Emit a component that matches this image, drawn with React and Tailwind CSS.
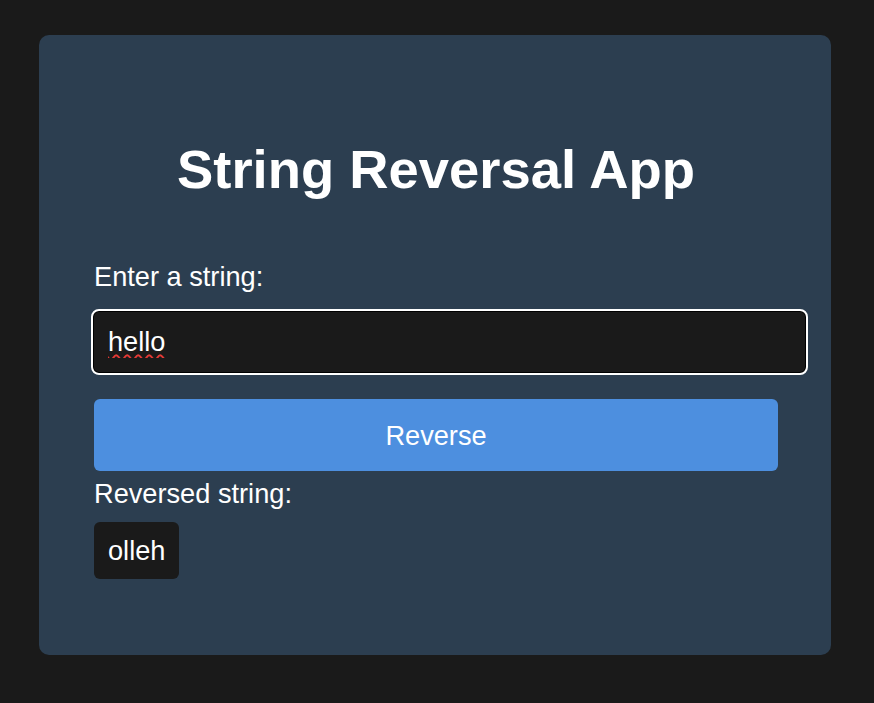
import React, { useState } from "react";

export default function App() {
  const [value, setValue] = useState("hello");
  const [reversed, setReversed] = useState("olleh");
  return (
    <div className="min-h-screen w-full bg-[#1a1a1a] pt-[35px] pl-[39px] pb-[48px] font-['Liberation_Sans',Arial,sans-serif] text-white">
      <div className="w-[792px] rounded-[10px] bg-[#2c3e50] pt-[104px] pb-[76px] pl-[55px] pr-[53px]">
        <h1 className="text-center text-[54.4px] font-bold leading-[62px]">
          String Reversal App
        </h1>
        <label className="mt-[60px] block text-[27.2px] leading-[31px]">
          Enter a string:
        </label>
        <input
          value={value}
          onChange={(e) => setValue(e.target.value)}
          className="mt-[17px] -ml-[3px] block h-[66px] w-[717px] rounded-[8px] border-2 border-white bg-[#1a1a1a] px-[15px] text-[27.2px] leading-[31px] text-white underline decoration-wavy decoration-[#e53935] decoration-2 underline-offset-[3px] shadow-[inset_0_0_0_1px_#000] outline-none"
        />
        <button
          onClick={() => setReversed(value.split("").reverse().join(""))}
          className="mt-[24px] block h-[72px] w-[684px] rounded-[6px] bg-[#4d8fdf] text-[27.2px] leading-[31px] text-white"
        >
          Reverse
        </button>
        <div className="mt-[7px] text-[27.2px] leading-[31px]">Reversed string:</div>
        <div className="mt-[13px] inline-block rounded-[6px] bg-[#1a1a1a] px-[14px] py-[13px] text-[27.2px] leading-[31px]">
          {reversed}
        </div>
      </div>
    </div>
  );
}
